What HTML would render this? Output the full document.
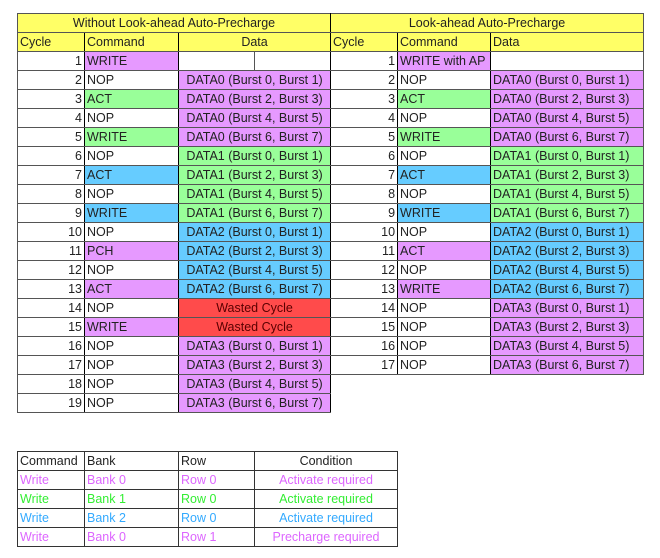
<!DOCTYPE html>
<html><head><meta charset="utf-8"><style>
body{margin:0;background:#fff;font-family:"Liberation Sans",Arial,sans-serif;font-size:12.5px;color:#222;}
table{border-collapse:collapse;position:absolute;table-layout:fixed;}
td{height:18px;padding:0 2px;border:1px solid #555;white-space:nowrap;overflow:hidden;line-height:18px;}
.r{text-align:right;border-right:1px solid #000;}
.c{text-align:center}
.P{background:#e699ff}.G{background:#99ff99}.B{background:#66ccff}.R{background:#ff4b4b;color:#5a0000;text-align:center}.Y{background:#ffff66}
.cm{border-right:1px solid #000}
.n{border:none}
#t2 td{border:1px solid #333}
.p{color:#dd66ff}.g{color:#33ee33}.b{color:#33aaff}
</style></head><body>
<table id="t1" style="left:17px;top:13px;width:626px">
<colgroup><col style="width:67px"><col style="width:94px"><col style="width:76px"><col style="width:76px"><col style="width:67px"><col style="width:93px"><col style="width:153px"></colgroup>
<tr class="Y"><td colspan="4" class="c" style="border-right:1px solid #000">Without Look-ahead Auto-Precharge</td><td colspan="3" class="c">Look-ahead Auto-Precharge</td></tr>
<tr class="Y"><td class="cm">Cycle</td><td class="cm">Command</td><td colspan="2" class="c cm">Data</td><td class="cm">Cycle</td><td class="cm">Command</td><td>Data</td></tr>
<tr><td class="r">1</td><td class="P cm">WRITE</td><td></td><td class="cm"></td><td class="r">1</td><td class="P cm">WRITE with AP</td><td></td></tr>
<tr><td class="r">2</td><td class="cm">NOP</td><td colspan="2" class="P c cm">DATA0 (Burst 0, Burst 1)</td><td class="r">2</td><td class="cm">NOP</td><td class="P">DATA0 (Burst 0, Burst 1)</td></tr>
<tr><td class="r">3</td><td class="G cm">ACT</td><td colspan="2" class="P c cm">DATA0 (Burst 2, Burst 3)</td><td class="r">3</td><td class="G cm">ACT</td><td class="P">DATA0 (Burst 2, Burst 3)</td></tr>
<tr><td class="r">4</td><td class="cm">NOP</td><td colspan="2" class="P c cm">DATA0 (Burst 4, Burst 5)</td><td class="r">4</td><td class="cm">NOP</td><td class="P">DATA0 (Burst 4, Burst 5)</td></tr>
<tr><td class="r">5</td><td class="G cm">WRITE</td><td colspan="2" class="P c cm">DATA0 (Burst 6, Burst 7)</td><td class="r">5</td><td class="G cm">WRITE</td><td class="P">DATA0 (Burst 6, Burst 7)</td></tr>
<tr><td class="r">6</td><td class="cm">NOP</td><td colspan="2" class="G c cm">DATA1 (Burst 0, Burst 1)</td><td class="r">6</td><td class="cm">NOP</td><td class="G">DATA1 (Burst 0, Burst 1)</td></tr>
<tr><td class="r">7</td><td class="B cm">ACT</td><td colspan="2" class="G c cm">DATA1 (Burst 2, Burst 3)</td><td class="r">7</td><td class="B cm">ACT</td><td class="G">DATA1 (Burst 2, Burst 3)</td></tr>
<tr><td class="r">8</td><td class="cm">NOP</td><td colspan="2" class="G c cm">DATA1 (Burst 4, Burst 5)</td><td class="r">8</td><td class="cm">NOP</td><td class="G">DATA1 (Burst 4, Burst 5)</td></tr>
<tr><td class="r">9</td><td class="B cm">WRITE</td><td colspan="2" class="G c cm">DATA1 (Burst 6, Burst 7)</td><td class="r">9</td><td class="B cm">WRITE</td><td class="G">DATA1 (Burst 6, Burst 7)</td></tr>
<tr><td class="r">10</td><td class="cm">NOP</td><td colspan="2" class="B c cm">DATA2 (Burst 0, Burst 1)</td><td class="r">10</td><td class="cm">NOP</td><td class="B">DATA2 (Burst 0, Burst 1)</td></tr>
<tr><td class="r">11</td><td class="P cm">PCH</td><td colspan="2" class="B c cm">DATA2 (Burst 2, Burst 3)</td><td class="r">11</td><td class="P cm">ACT</td><td class="B">DATA2 (Burst 2, Burst 3)</td></tr>
<tr><td class="r">12</td><td class="cm">NOP</td><td colspan="2" class="B c cm">DATA2 (Burst 4, Burst 5)</td><td class="r">12</td><td class="cm">NOP</td><td class="B">DATA2 (Burst 4, Burst 5)</td></tr>
<tr><td class="r">13</td><td class="P cm">ACT</td><td colspan="2" class="B c cm">DATA2 (Burst 6, Burst 7)</td><td class="r">13</td><td class="P cm">WRITE</td><td class="B">DATA2 (Burst 6, Burst 7)</td></tr>
<tr><td class="r">14</td><td class="cm">NOP</td><td colspan="2" class="R cm">Wasted Cycle</td><td class="r">14</td><td class="cm">NOP</td><td class="P">DATA3 (Burst 0, Burst 1)</td></tr>
<tr><td class="r">15</td><td class="P cm">WRITE</td><td colspan="2" class="R cm">Wasted Cycle</td><td class="r">15</td><td class="cm">NOP</td><td class="P">DATA3 (Burst 2, Burst 3)</td></tr>
<tr><td class="r">16</td><td class="cm">NOP</td><td colspan="2" class="P c cm">DATA3 (Burst 0, Burst 1)</td><td class="r">16</td><td class="cm">NOP</td><td class="P">DATA3 (Burst 4, Burst 5)</td></tr>
<tr><td class="r">17</td><td class="cm">NOP</td><td colspan="2" class="P c cm">DATA3 (Burst 2, Burst 3)</td><td class="r">17</td><td class="cm">NOP</td><td class="P">DATA3 (Burst 6, Burst 7)</td></tr>
<tr><td class="r">18</td><td class="cm">NOP</td><td colspan="2" class="P c cm">DATA3 (Burst 4, Burst 5)</td><td class="n"></td><td class="n"></td><td class="n"></td></tr>
<tr><td class="r">19</td><td class="cm">NOP</td><td colspan="2" class="P c cm">DATA3 (Burst 6, Burst 7)</td><td class="n"></td><td class="n"></td><td class="n"></td></tr>
</table>
<table id="t2" style="left:17px;top:451px;width:380px">
<colgroup><col style="width:67px"><col style="width:94px"><col style="width:76px"><col style="width:143px"></colgroup>
<tr><td>Command</td><td>Bank</td><td>Row</td><td class="c">Condition</td></tr>
<tr class="p"><td>Write</td><td>Bank 0</td><td>Row 0</td><td class="c">Activate required</td></tr>
<tr class="g"><td>Write</td><td>Bank 1</td><td>Row 0</td><td class="c">Activate required</td></tr>
<tr class="b"><td>Write</td><td>Bank 2</td><td>Row 0</td><td class="c">Activate required</td></tr>
<tr class="p"><td>Write</td><td>Bank 0</td><td>Row 1</td><td class="c">Precharge required</td></tr>
</table>
</body></html>
